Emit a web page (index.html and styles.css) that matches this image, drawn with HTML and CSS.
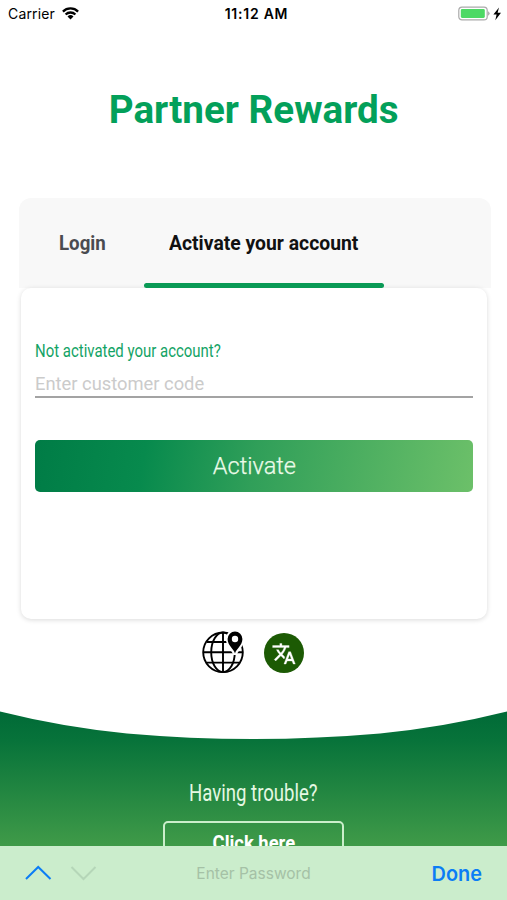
FILE: index.html
```html
<!DOCTYPE html>
<html lang="en">
<head>
<meta charset="utf-8">
<title>Partner Rewards</title>
<link rel="stylesheet" href="styles.css">
</head>
<body>
<div class="screen">
  <header class="status">
    <div class="carrier"><span>Carrier</span>
      <svg width="17" height="13" viewBox="0 0 17 13"><g fill="none" stroke="#000" stroke-width="2.3"><path d="M.9 4.6a10.8 10.8 0 0 1 15.2 0"/><path d="M3.6 7.500a7 7 0 0 1 9.800 0"/></g><path d="M5.500 9.400a4.300 4.300 0 0 1 6 0l-3 3z"/></svg>
    </div>
    <div class="time">11:12 AM</div>
    <div class="power">
      <svg width="44" height="16" viewBox="0 0 44 16"><rect x=".8" y="1.100" width="28.400" height="12.800" rx="3.200" fill="#fff" stroke="#aaa" stroke-width="1.200"/><rect x="2.800" y="3.100" width="24" height="8.800" rx="1.300" fill="#4cd964"/><path d="M30.500 5.700q1.800 1.800 0 3.600z" fill="#999" stroke="#999" stroke-width=".5"/><path d="M41 1.500 35.400 8.400h3.200l-1.300 5.800 5.700-7.400h-3.400z"/></svg>
    </div>
  </header>
  <h1 class="title"><span>Partner Rewards</span></h1>
  <section class="panel">
    <nav class="tabs">
      <a class="tab login"><span>Login</span></a>
      <a class="tab active"><span>Activate your account</span></a>
    </nav>
    <form class="card">
      <label class="label"><span>Not activated your account?</span></label>
      <div class="field"><span>Enter customer code</span></div>
      <button class="submit" type="button"><span>Activate</span></button>
    </form>
  </section>
  <div class="locale">
    <svg width="44" height="46" viewBox="0 0 44 46"><g fill="none" stroke="#000" stroke-width="1.900"><circle cx="21" cy="23.300" r="19.800"/><ellipse cx="21" cy="23.300" rx="11.800" ry="19.800"/><path d="M21 3.500v39.600M1.500 23.300h39M5 13h32M5 33.600h32"/></g><path d="M33 25.500c-1-4.600-7.400-8.500-7.400-15.500a7.400 7.600 0 0 1 14.800 0c0 7-6.400 10.900-7.400 15.500z" stroke="#fff" stroke-width="3.600"/><path d="M33 24.500c-1-4.500-7.400-8-7.400-14.500a7.400 7.600 0 0 1 14.800 0c0 6.500-6.400 10-7.400 14.500z"/><circle cx="33" cy="10" r="3.200" fill="#fff"/></svg>
    <svg width="40" height="40" viewBox="0 0 40 40"><circle cx="20" cy="20" r="20" fill="#1c5a04"/><path transform="translate(7.600 8.400) scale(1.030)" fill="#fff" stroke="#fff" stroke-width=".3" d="M12.870 15.070l-2.540-2.510.03-.03c1.740-1.940 2.980-4.170 3.710-6.530H17V4h-7V2H8v2H1v1.990h11.170C11.500 7.920 10.440 9.750 9 11.350 8.070 10.320 7.300 9.190 6.690 8h-2c.73 1.630 1.730 3.170 2.980 4.560l-5.090 5.020L4 19l5-5 3.110 3.110.76-2.040zM18.500 10h-2L12 22h2l1.120-3h4.750L21 22h2l-4.500-12zm-2.620 7l1.620-4.330L19.120 17h-3.240z"/></svg>
  </div>
  <footer class="help">
    <svg class="curve" width="507" height="30" viewBox="0 0 507 30"><path d="M0 0V1.500Q62 17 127 23.500Q190 29 253 29Q317 29 380 23.500Q445 17 507 1.500V0z" fill="#fff"/></svg>
    <p class="trouble"><span>Having trouble?</span></p>
    <a class="click"><span>Click here</span></a>
  </footer>
  <div class="keybar">
    <svg width="74" height="20" viewBox="0 0 74 20" fill="none" stroke-width="2"><path d="M1 16 13.200 4 25.500 16" stroke="#0b7df5"/><path d="M46.500 4 58.500 16 70.500 4" stroke="#b5d6b8"/></svg>
    <span class="hint">Enter Password</span>
    <span class="done">Done</span>
  </div>
</div>
</body>
</html>
```
FILE: styles.css
```css
* { box-sizing: border-box; }
body { margin: 0; background: #fff; font-family: Roboto, "Liberation Sans", sans-serif; }
.screen { position: relative; width: 507px; height: 900px; overflow: hidden; display: flex; flex-direction: column; }
svg { display: block; flex: none; }
span { display: inline-block; white-space: nowrap; transform-origin: left center; }
.status { height: 27px; display: grid; grid-template-columns: 1fr auto 1fr; align-items: center; padding: 0 5px 0 8px; font: 14px Inter, sans-serif; }
.carrier { display: flex; align-items: center; gap: 7px; letter-spacing: .15px; }
.time { font-weight: 600; letter-spacing: .75px; transform: translateX(1.500px); }
.power { display: flex; justify-content: flex-end; }
.title { margin: 59px 0 0; height: 47px; line-height: 47px; text-align: center; font-size: 39.500px; font-weight: 700; color: #03a05a; }
.title span { transform: translateX(.5px) scaleX(.978); transform-origin: center; }
.panel { margin: 65px 16px 0 19px; height: 424px; display: flex; flex-direction: column; }
.tabs { height: 90px; background: #f8f8f8; border-radius: 12px 12px 0 0; display: flex; padding-left: 39px; }
.tab { height: 90px; line-height: 90px; font-size: 20px; font-weight: 700; }
.login { width: 86px; color: #4a4b50; }
.login span { transform: translateX(1px) scaleX(.935); }
.active { position: relative; width: 240px; padding-left: 25px; color: #111; }
.active::after { content: ""; position: absolute; left: 0; right: 0; bottom: 0; height: 5px; border-radius: 2.500px; background: #0a9a56; z-index: 1; }
.active span { transform: scaleX(.967); }
.card { margin: 0 4px 0 2px; height: 331px; padding: 53px 14px 0; background: #fff; border-radius: 10px; box-shadow: 0 1px 5px rgba(0,0,0,.15); }
.label { display: block; height: 20px; line-height: 20px; font-size: 19px; color: #13a365; }
.label span { transform: scaleX(.787); }
.field { height: 37px; padding-top: 11px; line-height: 24px; border-bottom: 2px solid #a3a3a3; font-size: 19px; color: #cbcbcb; }
.field span { transform: scaleX(.965); }
.submit { display: block; width: 100%; height: 52px; margin-top: 42px; padding: 0; border: 0; border-radius: 5px; background: linear-gradient(100deg, #007c46, #078a4d 25%, #309f59 50%, #6cc069); color: #ecfbe9; font: 300 24px Roboto, sans-serif; -webkit-text-stroke: .25px #ecfbe9; }
.submit span { transform: scaleX(.98); transform-origin: center; }
.locale { margin-top: 7px; height: 46px; display: flex; align-items: center; gap: 18px; padding-left: 202px; }
.locale svg + svg { margin-top: 2px; }
.help { margin-top: 35px; height: 190px; display: flex; flex-direction: column; align-items: center; background: linear-gradient(#006a37 0, #07733a 16%, #469f4a 78%); }
.trouble { margin: 38px 0 0; height: 30px; line-height: 30px; font-size: 23.500px; color: #e5f8e3; }
.trouble span { transform: scaleX(.79); transform-origin: center; }
.click { margin-top: 13px; width: 181px; height: 46px; line-height: 40px; border: 2px solid #cbeecb; border-radius: 5px; text-align: center; font-size: 20px; font-weight: 700; color: #fff; }
.click span { transform: scaleX(.92); transform-origin: center; }
.keybar { position: absolute; left: 0; bottom: 0; width: 507px; height: 54px; padding: 0 25px; background: #cbedcc; display: grid; grid-template-columns: 1fr auto 1fr; align-items: center; font-family: Inter, sans-serif; }
.hint { font-size: 15.500px; color: #a5c1a6; }
.done { justify-self: end; font-size: 20.500px; font-weight: 600; color: #0b7df5; transform: scaleX(.97); transform-origin: right; }
```
